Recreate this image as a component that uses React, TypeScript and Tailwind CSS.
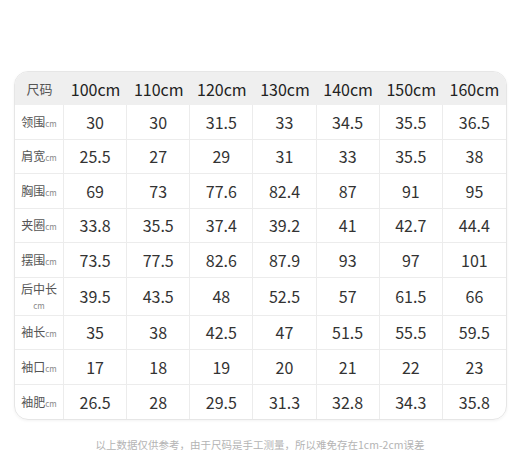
import React from 'react';

// 尺码表数据
const sizes = ['100cm', '110cm', '120cm', '130cm', '140cm', '150cm', '160cm'];

interface Row {
	label: string;
	values: string[];
	tall?: boolean;
}

const rows: Row[] = [
	{ label: '领围', values: ['30', '30', '31.5', '33', '34.5', '35.5', '36.5'] },
	{ label: '肩宽', values: ['25.5', '27', '29', '31', '33', '35.5', '38'] },
	{ label: '胸围', values: ['69', '73', '77.6', '82.4', '87', '91', '95'] },
	{ label: '夹圈', values: ['33.8', '35.5', '37.4', '39.2', '41', '42.7', '44.4'] },
	{ label: '摆围', values: ['73.5', '77.5', '82.6', '87.9', '93', '97', '101'] },
	{ label: '后中长', values: ['39.5', '43.5', '48', '52.5', '57', '61.5', '66'], tall: true },
	{ label: '袖长', values: ['35', '38', '42.5', '47', '51.5', '55.5', '59.5'] },
	{ label: '袖口', values: ['17', '18', '19', '20', '21', '22', '23'] },
	{ label: '袖肥', values: ['26.5', '28', '29.5', '31.3', '32.8', '34.3', '35.8'] },
];

export default function App() {
	return (
		<div className="w-[520px] bg-white font-['Noto_Sans_CJK_SC','Noto_Sans',sans-serif] pt-[71px]">
			<div className="mx-[14px] w-[493px] rounded-[14px] border border-[#e6e6e6] overflow-hidden shadow-[0_1px_3px_rgba(0,0,0,0.05)]">
				{/* 表头 */}
				<div className="grid grid-cols-[49px_repeat(7,1fr)] h-[33px] bg-[#efefef] items-center">
					<div className="text-center text-[13px] text-[#555]">尺码</div>
					{sizes.map((s) => (
						<div key={s} className="text-center text-[16px] text-[#222]">
							{s}
						</div>
					))}
				</div>

				{rows.map((row, i) => (
					<div
						key={row.label}
						className={
							'grid grid-cols-[49px_repeat(7,1fr)] ' +
							(row.tall ? 'h-[38px] ' : 'h-[34.5px] ') +
							(i < rows.length - 1 ? 'border-b border-[#ececec]' : '')
						}
					>
						<div className="flex items-center justify-center border-r border-[#ececec] text-[12px] text-[#555] leading-none">
							{row.tall ? (
								<div className="flex flex-col items-center gap-[7px]">
									<span>{row.label}</span>
									<span className="text-[8px] text-[#888]">cm</span>
								</div>
							) : (
								<span>
									{row.label}
									<span className="text-[8px] text-[#888]">cm</span>
								</span>
							)}
						</div>
						{row.values.map((v, j) => (
							<div
								key={j}
								className={
									'flex items-center justify-center text-[16px] text-[#333] ' +
									(j < row.values.length - 1 ? 'border-r border-[#ececec]' : '')
								}
							>
								{v}
							</div>
						))}
					</div>
				))}
			</div>

			<p className="mt-[20px] text-center text-[10.5px] leading-[10px] text-[#b4b4b4]">
				以上数据仅供参考，由于尺码是手工测量，所以难免存在1cm-2cm误差
			</p>
		</div>
	);
}
